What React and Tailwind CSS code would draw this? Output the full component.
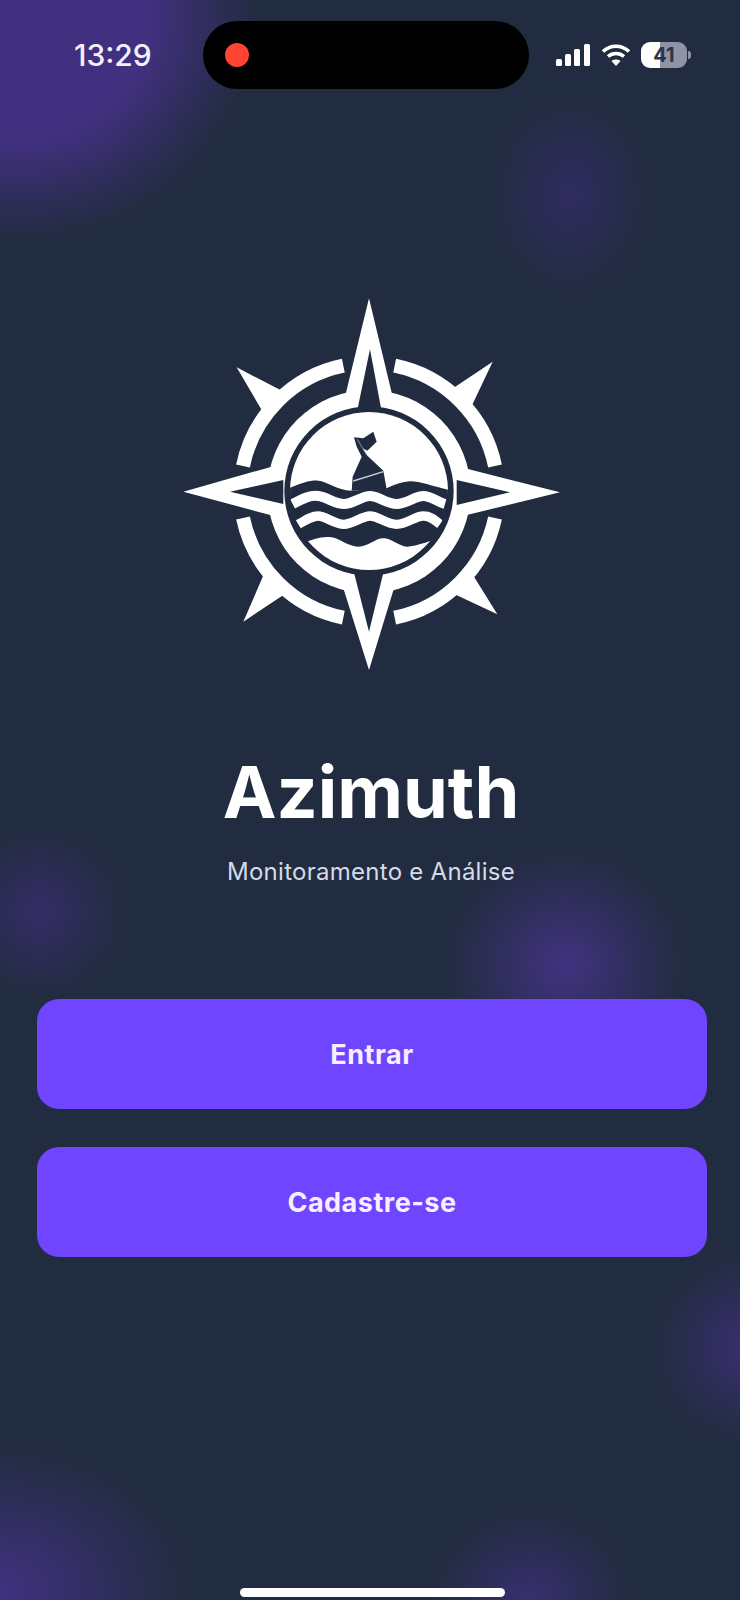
const bgGlow =
  'bg-[radial-gradient(ellipse_235px_225px_at_20px_15px,#41307f_0%,#41307f_55%,rgba(65,48,127,0)_100%),radial-gradient(ellipse_80px_100px_at_570px_195px,#302c62_0%,rgba(48,44,98,0)_100%),radial-gradient(ellipse_85px_85px_at_40px_912px,#342d68_0%,rgba(52,45,104,0)_100%),radial-gradient(ellipse_120px_115px_at_565px_965px,#413280_0%,rgba(65,50,128,0)_100%),radial-gradient(ellipse_90px_95px_at_745px_1348px,#382f70_0%,rgba(56,47,112,0)_100%),radial-gradient(ellipse_190px_145px_at_0px_1590px,#403180_0%,rgba(64,49,128,0)_100%),radial-gradient(ellipse_100px_90px_at_530px_1600px,#382f70_0%,rgba(56,47,112,0)_100%)]'

const DARK = '#212b40'

const arcs = [
  'M219 558A386 386 0 0 1 520 257',
  'M674 257A386 386 0 0 1 975 558',
  'M975 714A386 386 0 0 1 674 1013',
  'M520 1013A386 386 0 0 1 219 714',
]

const Logo = () => (
  <svg viewBox="0 0 1200 1200" className="h-[400px] w-[400px]">
    <defs>
      <clipPath id="disc">
        <circle cx="597" cy="633" r="237" />
      </clipPath>
    </defs>
    {arcs.map((d) => (
      <path key={d} d={d} fill="none" stroke="#fff" strokeWidth="42" />
    ))}
    <g fill="#fff">
      <polygon points="200,262 350,340 282,402" />
      <polygon points="968,245 838,332 898,393" />
      <polygon points="220,1025 288,868 355,935" />
      <polygon points="982,1003 898,868 838,935" />
      <polygon points="597,55 668,350 885,565 1170,637 878,708 672,925 597,1170 520,925 312,708 40,635 305,560 525,350" />
      <circle cx="597" cy="635" r="305" />
    </g>
    <circle cx="597" cy="633" r="254" fill={DARK} />
    <g fill={DARK}>
      <polygon points="600,208 560,400 636,400" />
      <polygon points="1020,637 860,600 860,675" />
      <polygon points="597,1055 550,870 642,870" />
      <polygon points="180,635 340,600 340,672" />
    </g>
    <g clipPath="url(#disc)">
      <rect x="350" y="390" width="500" height="250" fill="#fff" />
      <path
        d="M350 628C390 610 420 600 445 602S500 630 545 632L650 625S690 605 720 604S790 620 845 632V660H350Z"
        fill={DARK}
      />
      <path
        d="M368 672C400 655 420 645 445 648S495 672 522 672S575 648 600 648S650 672 680 672S735 648 760 648S800 665 825 672"
        fill="none"
        stroke="#fff"
        strokeWidth="30"
      />
      <path
        d="M385 733C410 718 425 708 445 708S495 733 522 733S575 708 600 708S650 733 680 733S735 708 760 708S795 722 810 733"
        fill="none"
        stroke="#fff"
        strokeWidth="28"
      />
      <path
        d="M400 790C430 775 460 768 485 772S535 800 565 800S615 775 640 775S690 800 710 800S760 790 790 780V900H400Z"
        fill="#fff"
      />
    </g>
    <path
      d="M552 472L580 475L610 455L620 485L592 512L578 505L590 525L640 572L650 628L545 632L548 590L575 530L560 500Z"
      fill={DARK}
    />
    <path d="M550 603L640 575" stroke="#c8d0de" strokeWidth="4" fill="none" />
    <path d="M562 478L590 525" stroke="#8a93a8" strokeWidth="3" fill="none" />
  </svg>
)

const StatusIcons = () => (
  <div className="flex items-center">
    <svg viewBox="0 0 34 22" className="h-[22px] w-[34px]" fill="#fff">
      <rect x="0" y="15" width="6" height="7" rx="1.5" />
      <rect x="9" y="10" width="6" height="12" rx="1.5" />
      <rect x="18" y="5" width="6" height="17" rx="1.5" />
      <rect x="28" y="0" width="6" height="22" rx="1.5" />
    </svg>
    <svg viewBox="0 0 30 22" className="ml-[11px] h-[22px] w-[30px]" fill="none" stroke="#fff" strokeWidth="3.6">
      <path d="M2 7.5C9.5 .5 20.5 .5 28 7.5" />
      <path d="M7 12.5C11.5 8.5 18.5 8.5 23 12.5" />
      <path d="M15 22L10.5 17C13 15 17 15 19.5 17Z" fill="#fff" stroke="none" />
    </svg>
    <div className="ml-[10px] flex h-[26px] w-[46px] items-center justify-center rounded-[9px] bg-[linear-gradient(90deg,#fff_0%,#fff_41%,#8e93a6_41%,#8e93a6_100%)] text-[20px] font-bold leading-none text-[#2d3345]">
      41
    </div>
    <div className="ml-[1px] h-[8px] w-[3px] rounded-r-sm bg-[#8e93a6]" />
  </div>
)

const ActionButton = ({ children }) => (
  <button
    type="button"
    className="h-[110px] w-full rounded-[22px] bg-[#6f45ff] pt-[2px] text-[27px] font-bold tracking-[0.5px] text-[#f6efff]"
  >
    {children}
  </button>
)

const App = () => {
  return (
    <div className={`flex h-[1600px] w-full flex-col overflow-hidden bg-[#222c40] font-['Inter',sans-serif] ${bgGlow}`}>
      <div className="flex items-center pt-[21px]">
        <span className="ml-[74px] w-[78px] text-[30px] font-medium leading-none text-[#f3f0fa]">13:29</span>
        <div className="ml-[51px] flex h-[68px] w-[326px] items-center rounded-full bg-black pl-[22px]">
          <div className="h-[24px] w-[24px] rounded-full bg-[#ff4433]" />
        </div>
        <div className="ml-[27px]">
          <StatusIcons />
        </div>
      </div>

      <div className="mt-[191px] flex justify-center">
        <Logo />
      </div>

      <h1 className="mt-[69px] pl-[2px] text-center text-[72px] font-bold leading-[86px] text-white">Azimuth</h1>
      <p className="mt-[22px] pl-[2px] text-center text-[24px] leading-[30px] tracking-[0.27px] text-[#d5dbe6]">
        Monitoramento e Análise
      </p>

      <div className="mt-[112px] flex flex-col gap-[38px] pl-[37px] pr-[33px]">
        <ActionButton>Entrar</ActionButton>
        <ActionButton>Cadastre-se</ActionButton>
      </div>

      <div className="mt-auto mb-[3px] flex justify-center pl-[5px]">
        <div className="h-[9px] w-[265px] rounded-full bg-white" />
      </div>
    </div>
  )
}

export default App
